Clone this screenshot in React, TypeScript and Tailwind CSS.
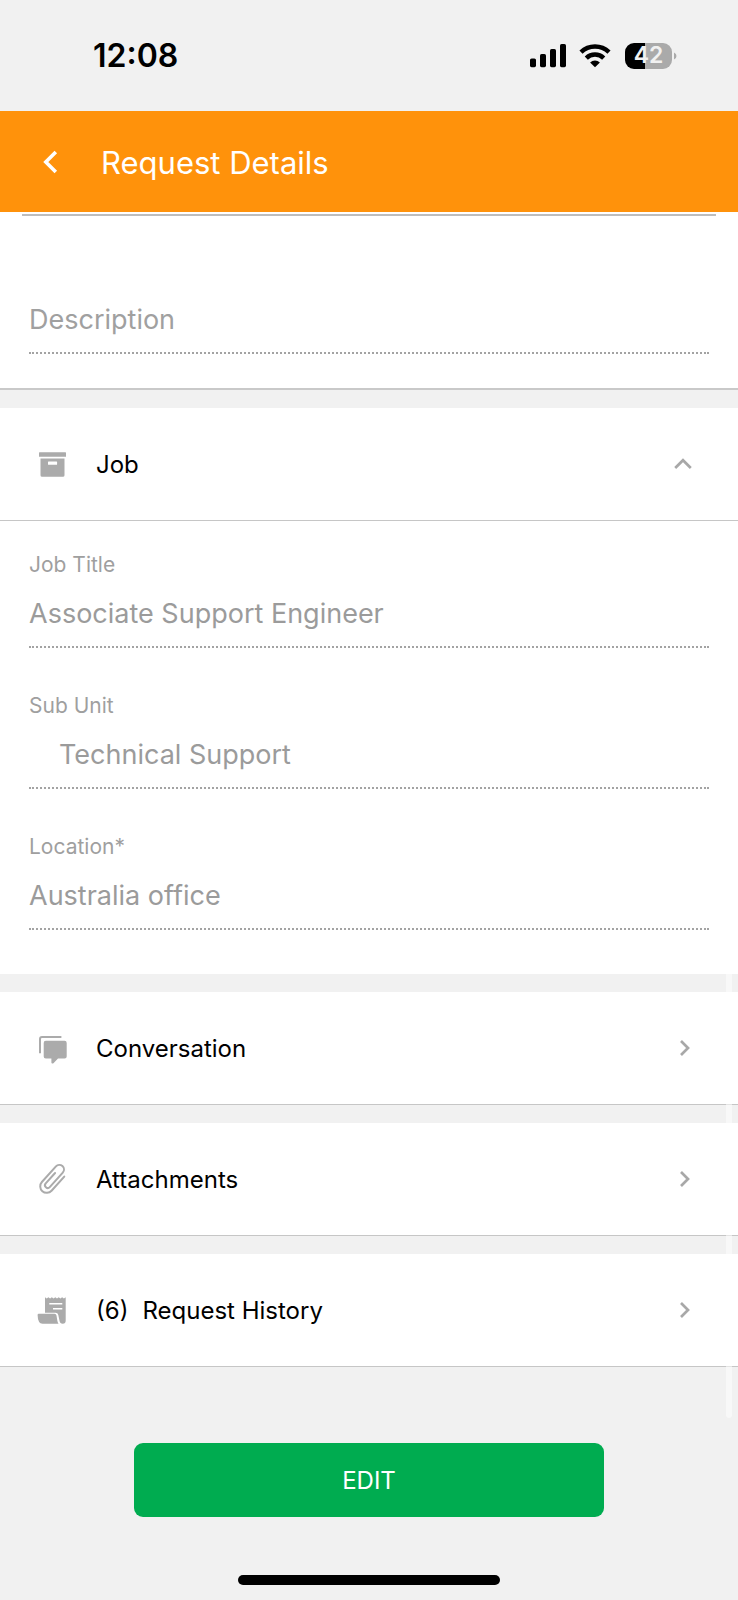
import { useState, type ReactNode } from "react";

type FieldProps = {
  id: string;
  label: string;
  value?: string;
  indent?: boolean;
};

function Field({ id, label, value, indent }: FieldProps) {
  return (
    <div>
      {value && (
        <label htmlFor={id} className="block text-[21px] leading-6 text-[#9f9f9f]">
          {label}
        </label>
      )}
      <input
        id={id}
        readOnly
        aria-label={label}
        placeholder={label}
        defaultValue={value}
        className={`block w-full h-[53px] pb-[15px] border-b-2 border-dotted border-[#a3a3a3] bg-transparent text-[27px] leading-9 text-[#9b9b9b] placeholder:text-[#a0a0a0] outline-none ${
          value ? "mt-[18px]" : ""
        } ${indent ? "pl-[30px]" : ""}`}
      />
    </div>
  );
}

/* ── ICONS ──────────────────────────────────────────── */

function ArchiveIcon() {
  return (
    <svg viewBox="0 0 32 32" className="w-8 h-8" fill="#ababab">
      <path d="M3.5 4.2h26q.5 0 .5.5v4h-27v-4q0-.5.5-.5z" />
      <path
        fillRule="evenodd"
        d="M4.5 10.4h24v16.8q0 1.6-1.6 1.6H6.1q-1.6 0-1.6-1.6zM12.6 13.4q-.6 0-.6.6v2.2q0 .6.6.6h7.9q.6 0 .6-.6V14q0-.6-.6-.6z"
      />
    </svg>
  );
}

function ConversationIcon() {
  return (
    <svg viewBox="0 0 32 32" className="w-8 h-8" fill="#ababab">
      <path d="M4 21.3V7q0-2 2-2h19.4" fill="none" stroke="#ababab" strokeWidth="2" />
      <path d="M9.8 8.8h18.8q2.1 0 2.1 2.1v13.6q0 2.1-2.1 2.1H22l-4.3 4.4q-.6.5-1.4.5-.9 0-.9-.9v-4H9.8q-2.1 0-2.1-2.1V10.9q0-2.1 2.1-2.1z" />
    </svg>
  );
}

function PaperclipIcon() {
  return (
    <svg viewBox="0 0 32 32" className="w-8 h-8" fill="none" stroke="#ababab" strokeWidth="2" strokeLinecap="round">
      <path
        transform="rotate(42 16 16)"
        d="M23.5 6V25a6.5 6.500 0 0 1-13 0V4a4.600 4.600 0 0 1 9.200 0V23.500a2.700 2.700 0 0 1-5.400 0V9.500"
      />
    </svg>
  );
}

function HistoryIcon() {
  return (
    <svg viewBox="0 0 32 32" className="w-8 h-8" fill="#ababab">
      <path d="M9 3.3l1.7 1.2 1.7-1.2 1.7 1.2 1.7-1.2 1.8 1.2 1.7-1.2 1.7 1.2 1.7-1.2 1.7 1.2 1.7-1.2 1.8 1.2 1.8-1.2V26.5q0 3.2-3 3.2-2.7 0-3.2-3L22.3 21q-.5-2.300-2.800-2.300H9z" />
      <path d="M2.6 19.8h15.9q1.7 0 2 1.6l.8 5.2q.3 1.8 1.2 3.1H6.5q-4.7 0-4.9-8.7 0-1.2 1-1.2z" />
      <path d="M13.3 9.700h13M17 14.700h9.300" stroke="#fff" strokeWidth="1.500" />
    </svg>
  );
}

function Chevron({ up }: { up?: boolean }) {
  return (
    <svg viewBox="0 0 20 20" className="w-5 h-5" fill="none" stroke="#a8a8a8" strokeWidth="2.7">
      {up ? <path d="M2.2 14L10 6.2l7.8 7.800" /> : <path d="M8 3l7 7-7 7" />}
    </svg>
  );
}

function StatusIcons() {
  return (
    <div className="flex items-center">
      <svg viewBox="0 0 38 26" className="w-[38px] h-[26px]">
        <rect x="1" y="15.5" width="6" height="8.7" rx="1.6" />
        <rect x="11" y="11" width="6" height="13.2" rx="1.6" />
        <rect x="21" y="6" width="6" height="18.2" rx="1.6" />
        <rect x="31" y="1" width="6" height="23.2" rx="1.6" />
      </svg>
      <svg viewBox="0 0 32 26" className="ml-3 w-8 h-[26px]" fill="none" stroke="#000" strokeWidth="4.5">
        <path d="M2 9.200a20 20 0 0 1 28 0" />
        <path d="M7.300 15.100a12.500 12.500 0 0 1 17.400 0" />
        <path d="M16 24.300l-4.900-4.900a7 7 0 0 1 9.800 0z" fill="#000" stroke="none" />
      </svg>
      <div className="ml-[14px] flex h-[26px] w-[47px] items-center justify-center rounded-[9px] bg-[linear-gradient(to_right,#000_42%,#aaaaaa_42%)] text-[23px] leading-none font-semibold text-[#f1f1f1]">
        42
      </div>
      <svg viewBox="0 0 4 10" className="ml-px w-1 h-[10px]" fill="#aaa">
        <path d="M1 1.500q2.500 1 2.500 3.500T1 8.500z" />
      </svg>
    </div>
  );
}

/* ── SECTION ROW ────────────────────────────────────── */

type SectionRowProps = {
  icon: ReactNode;
  title: string;
  count?: number;
  open?: boolean;
  onClick?: () => void;
};

function SectionRow({ icon, title, count, open, onClick }: SectionRowProps) {
  return (
    <button
      type="button"
      onClick={onClick}
      className="flex h-[113px] w-full items-center border-b border-[#c6c6c6] bg-white pl-9 pr-[45px] text-left text-[24px] leading-8 text-black"
    >
      {icon}
      <span className="ml-7 flex flex-1 gap-[14px] pt-[2px]">
        {count !== undefined && <span>({count})</span>}
        <span>{title}</span>
      </span>
      <Chevron up={open} />
    </button>
  );
}

export default function App() {
  const [jobOpen, setJobOpen] = useState(true);

  return (
    <div className="relative min-h-screen bg-[#f1f1f1] font-[Inter,sans-serif]">
      {/* ── STATUS BAR ───────────────────────────────── */}
      <div className="flex h-[111px] items-center justify-between pl-[93px] pr-[61px]">
        <span className="text-[32px] leading-none font-semibold text-black">12:08</span>
        <StatusIcons />
      </div>

      {/* ── HEADER ───────────────────────────────────── */}
      <header className="flex h-[101px] items-center bg-[#ff920b] pl-9 text-white">
        <button type="button" aria-label="Back" className="flex h-8 w-8 items-center justify-center">
          <svg viewBox="0 0 32 32" className="w-8 h-8" fill="none" stroke="#fff" strokeWidth="3.6">
            <path d="M19.800 6L9.800 16l10 10" />
          </svg>
        </button>
        <h1 className="ml-[33px] pt-[2px] text-[31px] leading-10 font-normal">Request Details</h1>
      </header>

      <main>
        <div className="flex flex-col gap-[18px]">
          <section className="border-b-2 border-[#c9c9c9] bg-white pt-[2px] pb-[34px]">
            <div className="mx-[22px] mb-[85px] border-b-2 border-[#bdbdbd]" />
            <div className="px-[29px]">
              <Field id="description" label="Description" />
            </div>
          </section>

          <section className="bg-white">
            <SectionRow icon={<ArchiveIcon />} title="Job" open={jobOpen} onClick={() => setJobOpen(!jobOpen)} />
            {jobOpen && (
              <div className="flex flex-col gap-[46px] px-[29px] pt-8 pb-11">
                <Field id="job-title" label="Job Title" value="Associate Support Engineer" />
                <Field id="sub-unit" label="Sub Unit" value="Technical Support" indent />
                <Field id="location" label="Location*" value="Australia office" />
              </div>
            )}
          </section>

          <SectionRow icon={<ConversationIcon />} title="Conversation" />
          <SectionRow icon={<PaperclipIcon />} title="Attachments" />
          <SectionRow icon={<HistoryIcon />} title="Request History" count={6} />
        </div>

        <div className="px-[134px] pt-[76px]">
          <button type="button" className="h-[74px] w-full rounded-[9px] bg-[#00ac50] pt-[2px] text-[24px] text-white">
            EDIT
          </button>
        </div>
      </main>

      {/* scroll indicator */}
      <div className="absolute right-[6px] bottom-[182px] h-[600px] w-[6px] rounded-full bg-white/50" />

      {/* home indicator */}
      <div className="pt-[58px] pb-[15px]">
        <div className="mx-auto h-[10px] w-[262px] rounded-full bg-black" />
      </div>
    </div>
  );
}
